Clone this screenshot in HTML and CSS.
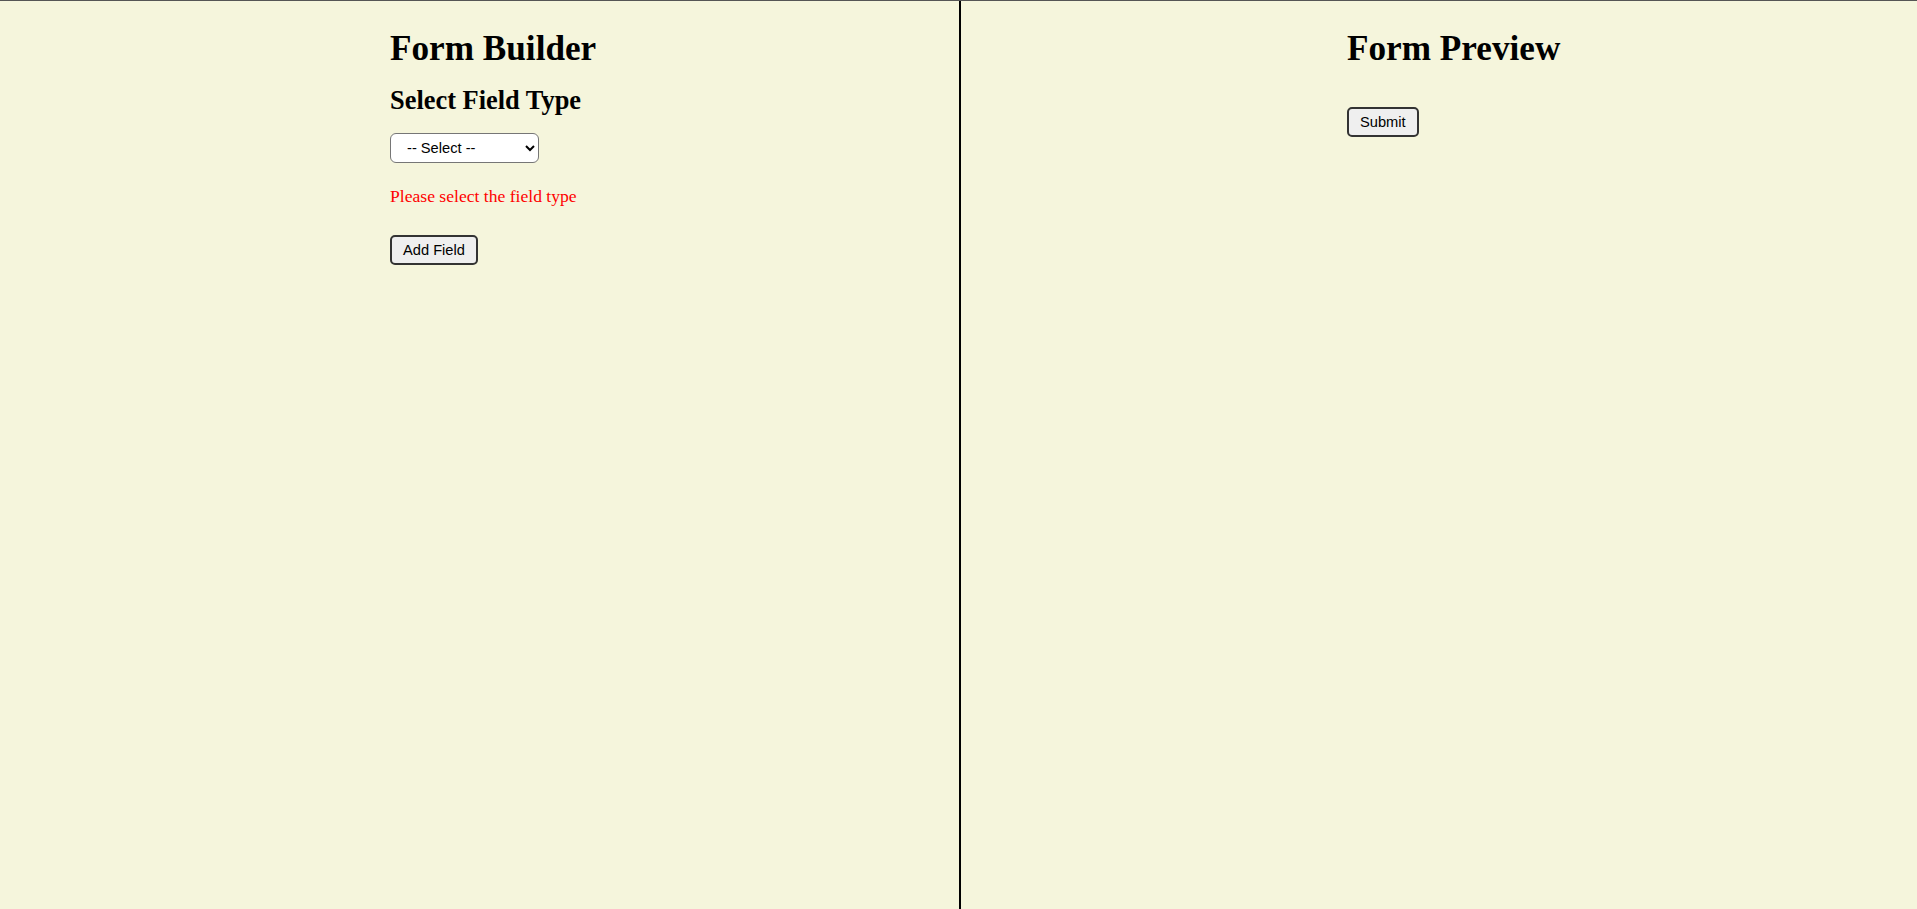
FILE: index.html
```html
<!DOCTYPE html>
<html lang="en">
<head>
<meta charset="utf-8">
<title>Form Builder</title>
<link rel="stylesheet" href="styles.css">
</head>
<body>
<div class="app">
  <section class="panel builder">
    <h1 class="title">Form Builder</h1>
    <h2 class="subtitle">Select Field Type</h2>
    <select class="type-select">
      <option>-- Select --</option>
      <option>Text</option>
      <option>Email</option>
      <option>Number</option>
      <option>Checkbox</option>
    </select>
    <p class="error">Please select the field type</p>
    <button class="btn add-btn" type="button">Add Field</button>
  </section>
  <section class="panel preview">
    <h1 class="title">Form Preview</h1>
    <form class="preview-form">
      <button class="btn submit-btn" type="button">Submit</button>
    </form>
  </section>
</div>
</body>
</html>
```
FILE: styles.css
```css
html, body {
  margin: 0;
  padding: 0;
  height: 100%;
  background: #f5f5dc;
}

body {
  font-family: "Liberation Serif", "Times New Roman", serif;
  color: #000;
}

.app {
  display: flex;
  height: 100vh;
  box-sizing: border-box;
  border-top: 1px solid #555;
}

.panel {
  box-sizing: border-box;
  padding-top: 28px;
  display: flex;
  flex-direction: column;
  align-items: flex-start;
}

.builder {
  width: 961px;
  flex: none;
  border-right: 2px solid #000;
  padding-left: 390px;
}

.preview {
  flex: 1;
  padding-left: 386px;
}

.title {
  margin: 0;
  font-size: 35.2px;
  font-weight: bold;
}

.subtitle {
  margin: 16px 0 0;
  font-size: 26.4px;
  font-weight: bold;
}

.type-select {
  margin-top: 17px;
  width: 149px;
  height: 30px;
  box-sizing: border-box;
  border: 1px solid #767676;
  border-radius: 6px;
  background: #fff;
  font-family: "Liberation Sans", Arial, sans-serif;
  font-size: 14.67px;
  padding: 0 10px 0 12px;
  color: #000;
}

.error {
  margin: 23px 0 0;
  font-size: 17.6px;
  color: #ff0000;
}

.btn {
  box-sizing: border-box;
  height: 30px;
  font-family: "Liberation Sans", Arial, sans-serif;
  font-size: 14.67px;
  color: #000;
  background: #efefef;
  border: 2px solid #333;
  border-radius: 5px;
  padding: 0 11px;
  line-height: normal;
}

.add-btn {
  margin-top: 28px;
}

.preview-form {
  margin: 38px 0 0;
}
```
